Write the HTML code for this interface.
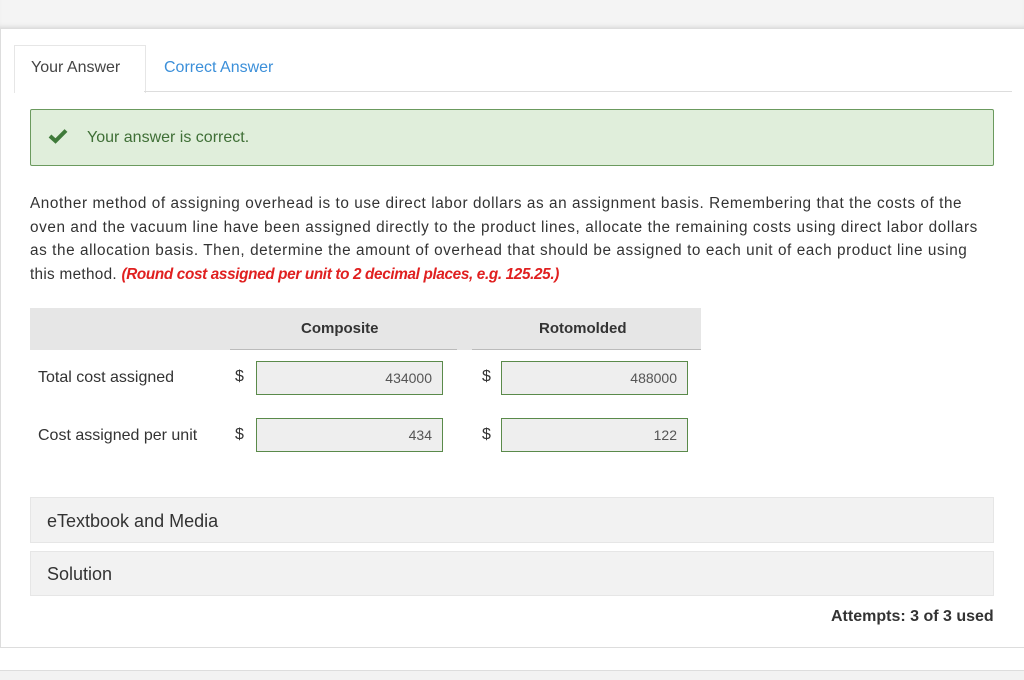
<!DOCTYPE html>
<html><head><style>
body{margin:0;width:1024px;height:679px;background:#fff;font-family:"Liberation Sans",sans-serif;color:#333;position:relative;overflow:hidden}
.a{position:absolute}
.top{left:0;top:0;width:1024px;height:28px;background:#f4f4f4;border-bottom:1px solid #ddd;box-shadow:inset 0 -4px 6px -4px #ccc}
.inp{position:absolute;height:34px;background:#eee;border:1px solid #5a8a4a;box-sizing:border-box;text-align:right;padding-right:10px;line-height:32px;font-size:14px;color:#555}
.box{position:absolute;left:30px;width:964px;background:#f2f2f2;border:1px solid #e6e6e6;box-sizing:border-box;font-size:18px;color:#333;padding-left:16px}
.p{white-space:nowrap}
</style></head><body>
<div class="a top"></div>
<div class="a" style="left:0;top:28px;width:1px;height:620px;background:#ddd"></div>
<div class="a" style="left:14px;top:45px;width:130px;height:47px;border:1px solid #e6e6e6;border-bottom:none;background:#fff"></div>
<div class="a" style="left:144px;top:91px;width:868px;height:1px;background:#ddd"></div>
<div class="a" style="left:31px;top:59px;font-size:16px;color:#444">Your Answer</div>
<div class="a" style="left:164px;top:59px;font-size:16px;color:#3b8fd9">Correct Answer</div>
<div class="a" style="left:30px;top:109px;width:964px;height:57px;background:#e0eedb;border:1px solid #6b9a5e;box-sizing:border-box;border-radius:2px"></div>
<svg class="a" style="left:48px;top:128px" width="20" height="16" viewBox="0 0 20 16"><path d="M2 8 L7.5 13 L18 2.5" fill="none" stroke="#3f7a3a" stroke-width="4"/></svg>
<div class="a" style="left:87px;top:129px;font-size:16px;color:#3f6f36">Your answer is correct.</div>
<div class="a p" style="left:30px;top:192px;font-size:15.3px;line-height:23.5px;color:#333">
<div style="letter-spacing:0.58px">Another method of assigning overhead is to use direct labor dollars as an assignment basis. Remembering that the costs of the</div>
<div style="letter-spacing:0.6px">oven and the vacuum line have been assigned directly to the product lines, allocate the remaining costs using direct labor dollars</div>
<div style="letter-spacing:0.58px">as the allocation basis. Then, determine the amount of overhead that should be assigned to each unit of each product line using</div>
<div style="letter-spacing:0.3px">this method. <i style="color:#e02020;font-weight:bold;letter-spacing:-0.35px">(Round cost assigned per unit to 2 decimal places, e.g. 125.25.)</i></div>
</div>
<div class="a" style="left:30px;top:308px;width:671px;height:42px;background:#e6e6e6"></div>
<div class="a" style="left:230px;top:349px;width:227px;height:1px;background:#bbb"></div>
<div class="a" style="left:472px;top:349px;width:229px;height:1px;background:#bbb"></div>
<div class="a" style="left:301px;top:320px;font-size:15px;font-weight:bold;color:#333">Composite</div>
<div class="a" style="left:539px;top:320px;font-size:15px;font-weight:bold;color:#333">Rotomolded</div>
<div class="a" style="left:38px;top:369px;font-size:16px">Total cost assigned</div>
<div class="a" style="left:38px;top:427px;font-size:16px">Cost assigned per unit</div>
<div class="a" style="left:235px;top:368px;font-size:16px">$</div>
<div class="a" style="left:482px;top:368px;font-size:16px">$</div>
<div class="a" style="left:235px;top:426px;font-size:16px">$</div>
<div class="a" style="left:482px;top:426px;font-size:16px">$</div>
<div class="inp" style="left:256px;top:361px;width:187px">434000</div>
<div class="inp" style="left:501px;top:361px;width:187px">488000</div>
<div class="inp" style="left:256px;top:418px;width:187px">434</div>
<div class="inp" style="left:501px;top:418px;width:187px">122</div>
<div class="box" style="top:497px;height:46px;line-height:46px">eTextbook and Media</div>
<div class="box" style="top:551px;height:45px;line-height:45px">Solution</div>
<div class="a" style="left:831px;top:608px;font-size:16px;font-weight:bold;color:#333">Attempts: 3 of 3 used</div>
<div class="a" style="left:0;top:647px;width:1024px;height:1px;background:#ddd"></div>
<div class="a" style="left:0;top:670px;width:1024px;height:9px;background:#f2f2f2;border-top:1px solid #ddd"></div>
</body></html>
